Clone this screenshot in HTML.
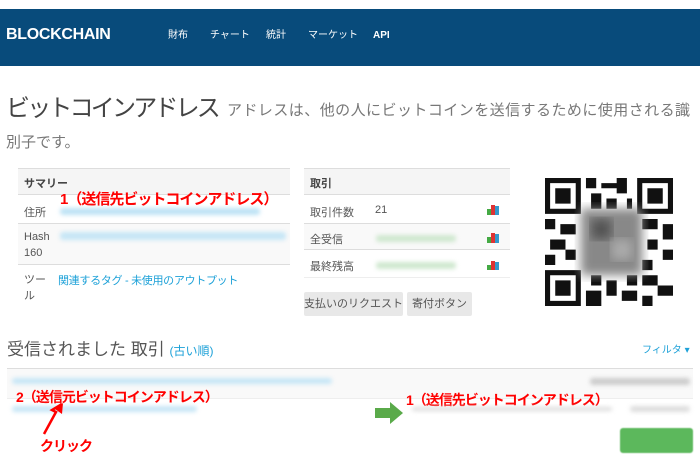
<!DOCTYPE html>
<html><head><meta charset="utf-8"><style>
*{margin:0;padding:0;box-sizing:border-box}
body{width:700px;height:470px;background:#fff;font-family:"Liberation Sans","Noto Sans CJK JP",sans-serif;position:relative;overflow:hidden;color:#333}
.a{position:absolute;white-space:nowrap}
.nav{left:0;top:9px;width:700px;height:57px;background:#084b7b}
.red{color:#f00;font-weight:bold;font-size:14px;letter-spacing:-1px}
.blur{filter:blur(2px);position:absolute;border-radius:3px}
.lbl{font-size:11px;color:#555}
.ni{top:30px;color:#fff;font-size:10px;line-height:12px}
</style></head><body>
<div class="a nav"></div>
<div class="a" style="left:6px;top:26px;color:#fff;font-weight:bold;font-size:16px;line-height:18px;letter-spacing:-0.3px">BLOCKCHAIN</div>
<div class="a ni" style="left:168px">財布</div>
<div class="a ni" style="left:210px">チャート</div>
<div class="a ni" style="left:266px">統計</div>
<div class="a ni" style="left:308px">マーケット</div>
<div class="a ni" style="left:373px;font-weight:bold">API</div>
<div class="a" style="left:6px;top:94px;font-size:24px;line-height:30px;color:#444;letter-spacing:-2.8px">ビットコインアドレス</div>
<div class="a" style="left:227px;top:102px;font-size:15px;line-height:18px;color:#777;letter-spacing:0.45px">アドレスは、他の人にビットコインを送信するために使用される識</div>
<div class="a" style="left:6px;top:134px;font-size:15px;line-height:18px;color:#777">別子です。</div>

<div class="a" style="left:18px;top:168px;width:272px;height:27px;background:#f5f5f5;border-top:1px solid #ddd;border-bottom:1px solid #ddd"></div>
<div class="a lbl" style="left:24px;top:175px;font-weight:bold;color:#444">サマリー</div>
<div class="a red" style="left:60px;top:188px;font-size:15px">1（送信先ビットコインアドレス）</div>
<div class="a lbl" style="left:24px;top:204px">住所</div>
<div class="blur" style="left:60px;top:208px;width:200px;height:7px;background:#bde3f5"></div>
<div class="a" style="left:18px;top:223px;width:272px;height:42px;background:#f9f9f9;border-top:1px solid #ddd;border-bottom:1px solid #ddd"></div>
<div class="a lbl" style="left:24px;top:229px;line-height:16px">Hash<br>160</div>
<div class="blur" style="left:60px;top:232px;width:226px;height:8px;background:#c6e6f6"></div>
<div class="a lbl" style="left:24px;top:272px;line-height:16px">ツー<br>ル</div>
<div class="a" style="left:58px;top:272px;font-size:11px;color:#1da1d8;letter-spacing:-0.3px">関連するタグ - 未使用のアウトプット</div>

<div class="a" style="left:304px;top:168px;width:206px;height:27px;background:#f5f5f5;border-top:1px solid #ddd;border-bottom:1px solid #ddd"></div>
<div class="a lbl" style="left:310px;top:175px;font-weight:bold;color:#444">取引</div>
<div class="a" style="left:304px;top:223px;width:206px;height:27px;background:#f9f9f9;border-top:1px solid #ddd;border-bottom:1px solid #ddd"></div>
<div class="a" style="left:304px;top:277px;width:206px;height:1px;background:#eee"></div>
<div class="a lbl" style="left:310px;top:204px">取引件数</div>
<div class="a lbl" style="left:375px;top:204px">21</div>
<div class="a lbl" style="left:310px;top:231px">全受信</div>
<div class="blur" style="left:376px;top:235px;width:80px;height:7px;background:#cfe8cf"></div>
<div class="a lbl" style="left:310px;top:258px">最終残高</div>
<div class="blur" style="left:376px;top:262px;width:80px;height:7px;background:#cfe8cf"></div>
<svg class="a" style="left:487px;top:204px" width="13" height="66">
<g><rect x="0" y="5" width="4" height="6" fill="#4a4"/><rect x="4" y="1" width="4" height="10" fill="#d33"/><rect x="8" y="2" width="4" height="9" fill="#39c"/></g>
<g transform="translate(0,28)"><rect x="0" y="5" width="4" height="6" fill="#4a4"/><rect x="4" y="1" width="4" height="10" fill="#d33"/><rect x="8" y="2" width="4" height="9" fill="#39c"/></g>
<g transform="translate(0,56)"><rect x="0" y="5" width="4" height="6" fill="#4a4"/><rect x="4" y="1" width="4" height="10" fill="#d33"/><rect x="8" y="2" width="4" height="9" fill="#39c"/></g>
</svg>
<div class="a" style="left:304px;top:292px;width:99px;height:24px;background:#e8e8e8;border-radius:2px;font-size:11px;color:#555;text-align:center;line-height:24px">支払いのリクエスト</div>
<div class="a" style="left:407px;top:292px;width:65px;height:24px;background:#e8e8e8;border-radius:2px;font-size:11px;color:#555;text-align:center;line-height:24px">寄付ボタン</div>

<svg class="a" style="left:545px;top:178px" width="128" height="128" viewBox="0 0 25 25">
<rect width="25" height="25" fill="#fff"/>
<g fill="#111"><path d="M0 0h7v7H0zM18 0h7v7h-7zM0 18h7v7H0z"/></g>
<g fill="#fff"><path d="M1 1h5v5H1zM19 1h5v5h-5zM1 19h5v5H1z"/></g>
<g fill="#111"><path d="M2 2h3v3H2zM20 2h3v3h-3zM2 20h3v3H2z"/>
<path d="M8 0h2v2H8zM11 1h3v1h-3zM14 0h2v3h-2zM9 3h2v3H9zM12 4h2v2h-2zM16 4h1v2h-1zM0 8h2v2H0zM3 9h3v2H3zM1 12h3v2H1zM4 14h2v2H4zM0 15h2v2H0zM19 8h3v2h-3zM23 9h2v3h-2zM20 12h2v2h-2zM23 14h2v2h-2zM19 16h2v2h-2zM9 19h2v2H9zM8 22h3v3H8zM12 20h2v3h-2zM15 22h3v2h-3zM19 19h3v2h-3zM22 21h3v2h-3zM19 23h2v2h-2zM16 19h2v2h-2z"/></g>
<defs><filter id="b"><feGaussianBlur stdDeviation="1"/></filter></defs>
<rect x="7" y="6" width="12" height="13" fill="#888" filter="url(#b)"/>
<rect x="9" y="8" width="4" height="4" fill="#555" filter="url(#b)"/>
<rect x="13" y="12" width="4" height="4" fill="#aaa" filter="url(#b)"/>
</svg>

<div class="a" style="left:7px;top:335px;font-size:17px;color:#555">受信されました 取引 <span style="font-size:12px;color:#1da1d8">(古い順)</span></div>
<div class="a" style="left:642px;top:341px;font-size:10px;color:#1da1d8">フィルタ ▾</div>
<div class="a" style="left:7px;top:368px;width:686px;height:1px;background:#ddd"></div>
<div class="a" style="left:7px;top:369px;width:686px;height:30px;background:#f9f9f9;border-bottom:1px solid #eee"></div>
<div class="blur" style="left:12px;top:378px;width:320px;height:6px;background:#c6e6f6"></div>
<div class="blur" style="left:590px;top:378px;width:100px;height:7px;background:#ccc"></div>
<div class="a red" style="left:16px;top:387px">2（送信元ビットコインアドレス）</div>
<div class="blur" style="left:12px;top:406px;width:185px;height:6px;background:#c6e6f6"></div>
<div class="a red" style="left:406px;top:390px">1（送信先ビットコインアドレス）</div>
<div class="blur" style="left:412px;top:407px;width:200px;height:4px;background:#ddd"></div>
<div class="blur" style="left:630px;top:406px;width:60px;height:6px;background:#ddd"></div>
<svg class="a" style="left:374px;top:401px" width="30" height="24"><path d="M1 7h15V1l13 11-13 11v-6H1z" fill="#5aaa4a"/></svg>
<svg class="a" style="left:38px;top:402px" width="28" height="36"><path d="M24 2L14 8l4 2-12 22" stroke="#f00" stroke-width="2.5" fill="none"/><path d="M25 1l-1 11-7-5z" fill="#f00"/></svg>
<div class="a red" style="left:40px;top:436px">クリック</div>
<div class="a" style="left:620px;top:428px;width:73px;height:25px;background:#5cb85c;border-radius:3px;filter:blur(0.6px)"></div>
</body></html>
